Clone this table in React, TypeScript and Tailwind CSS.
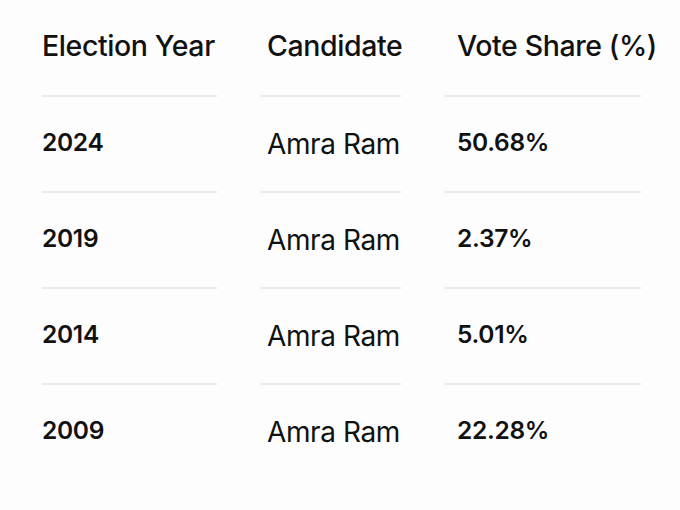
import React from 'react';

const rows = [
  { year: '2024', candidate: 'Amra Ram', share: '50.68%' },
  { year: '2019', candidate: 'Amra Ram', share: '2.37%' },
  { year: '2014', candidate: 'Amra Ram', share: '5.01%' },
  { year: '2009', candidate: 'Amra Ram', share: '22.28%' },
];

export default function App() {
  return (
    <div
      className="w-[680px] h-[510px] bg-[#fdfdfd] text-[#111111] pl-[42px]"
      style={{ fontFamily: 'Inter, "Noto Sans", sans-serif' }}
    >
      {/* Header */}
      <div className="flex h-[95px] items-center pb-[2px] whitespace-nowrap text-[28.5px] font-medium tracking-[-0.4px]">
        <div className="w-[175px]">Election Year</div>
        <div className="w-[141px] ml-[43px] pl-[7px]">Candidate</div>
        <div className="w-[197px] ml-[43px] pl-[13px]">Vote Share (%)</div>
      </div>

      {rows.map((row) => (
        <div key={row.year} className="flex h-[96px] whitespace-nowrap">
          <div className="w-[175px] border-t-2 border-[#ebebeb] flex items-center pb-[4px] text-[24.5px] font-semibold tracking-[-0.3px]">
            {row.year}
          </div>
          <div className="w-[141px] ml-[43px] pl-[7px] border-t-2 border-[#ebebeb] flex items-center text-[28px] font-normal tracking-[-0.4px]">
            {row.candidate}
          </div>
          <div className="w-[197px] ml-[43px] pl-[13px] border-t-2 border-[#ebebeb] flex items-center pb-[4px] text-[24.5px] font-semibold tracking-[-0.3px]">
            {row.share}
          </div>
        </div>
      ))}
    </div>
  );
}
